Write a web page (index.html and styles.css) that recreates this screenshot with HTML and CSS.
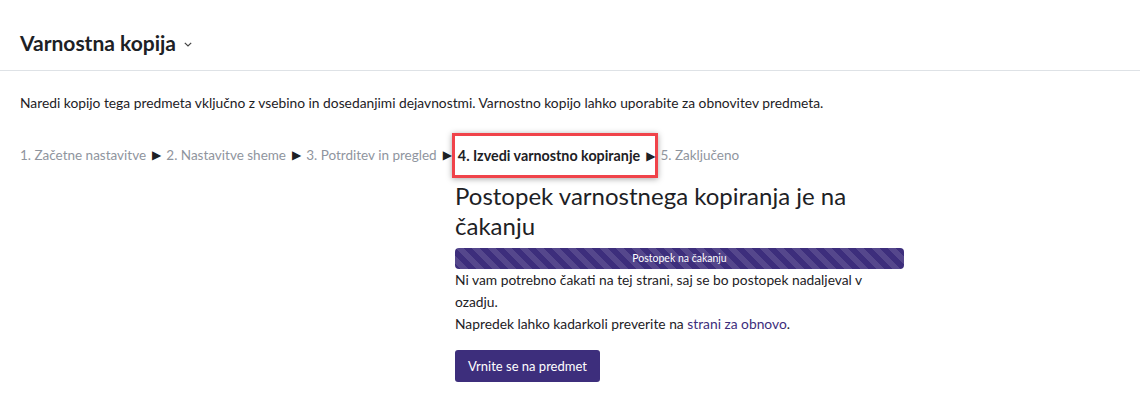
FILE: index.html
```html
<!DOCTYPE html>
<html>
	<head>
		<meta charset="utf-8" />
		<title>Varnostna kopija</title>
		<link rel="stylesheet" href="styles.css">
	</head>
	<body>
		<header class="page-header">
			<h2>Varnostna kopija</h2>
			<svg class="caret" width="8" height="5" viewBox="0 0 8 5"><path d="M0.8 0.8 L4 4 L7.2 0.8" fill="none" stroke="#444" stroke-width="1.2"/></svg>
		</header>

		<main class="content">
			<p class="intro">Naredi kopijo tega predmeta vključno z vsebino in dosedanjimi dejavnostmi. Varnostno kopijo lahko uporabite za obnovitev predmeta.</p>

			<div class="steps">
				<span class="step">1. Začetne nastavitve</span>
				<span class="arrow">&#9654;</span>
				<span class="step">2. Nastavitve sheme</span>
				<span class="arrow">&#9654;</span>
				<span class="step">3. Potrditev in pregled</span>
				<span class="arrow">&#9654;</span>
				<span class="current">
					<span class="step active">4. Izvedi varnostno kopiranje</span>
					<span class="arrow">&#9654;</span>
				</span>
				<span class="step">5. Zaključeno</span>
			</div>

			<div class="status">
				<div></div>
				<div class="status-box">
					<h3>Postopek varnostnega kopiranja je na čakanju</h3>
					<div class="progress">Postopek na čakanju</div>
					<p>Ni vam potrebno čakati na tej strani, saj se bo postopek nadaljeval v ozadju.</p>
					<p>Napredek lahko kadarkoli preverite na <a href="#">strani za obnovo</a>.</p>
					<a href="#" class="btn">Vrnite se na predmet</a>
				</div>
			</div>
		</main>
	</body>
</html>
```

FILE: styles.css
```css
html, body {
	margin: 0;
	padding: 0;
	background: #fff;
	font-family: Lato, 'Noto Sans', sans-serif;
	font-size: 13.8px;
	color: #1d2125;
}
h2, h3, p { margin: 0; }

.page-header {
	box-sizing: border-box;
	height: 71px;
	border-bottom: 1px solid #dee2e6;
	padding: 29px 20px 0;
	display: flex;
	align-items: flex-start;
}
.page-header h2 {
	font-size: 21px;
	font-weight: 700;
	line-height: 28px;
}
.caret { margin: 13px 0 0 8px; }

.content { padding: 21px 20px; }
.intro { line-height: 22px; }

.steps {
	margin-top: 30px;
	display: flex;
	align-items: center;
	color: #8f959e;
	line-height: 22px;
	font-size: 13.5px;
}
.arrow {
	color: #1d2125;
	font-family: 'DejaVu Sans', sans-serif;
	font-size: 12px;
	margin: 0 5px 0 6px;
}
.current {
	display: flex;
	align-items: center;
	height: 39px;
	padding-left: 3px;
	border: 3px solid #f0434a;
	box-shadow: 0 1px 6px rgba(0,0,0,0.35);
	margin: -11px 0 -12px -5px;
}
.current .arrow { margin-right: 0; }
.current + .step { margin-left: 2px; }
.step.active { color: #1d2125; font-weight: 700; font-size: 14.3px; }

.status {
	display: grid;
	grid-template-columns: 435px 449px;
	margin-top: 15px;
}
.status-box h3 {
	font-size: 24px;
	font-weight: 400;
	line-height: 30px;
	margin-bottom: 7px;
}
.progress {
	height: 21px;
	border-radius: 4px;
	background-color: #3d2e7c;
	background-image: linear-gradient(45deg, rgba(255,255,255,.12) 25%, transparent 25%, transparent 50%, rgba(255,255,255,.12) 50%, rgba(255,255,255,.12) 75%, transparent 75%, transparent);
	background-size: 16px 16px;
	color: #fff;
	font-size: 10.5px;
	line-height: 21px;
	text-align: center;
}
.status-box p { line-height: 22px; }
.status-box a { color: #3d2e7c; text-decoration: none; }
.status-box a.btn {
	display: inline-block;
	margin-top: 15px;
	padding: 6px 13px;
	background: #3d2e7c;
	color: #fff;
	border-radius: 3px;
	font-size: 13px;
	line-height: 20px;
}
```
